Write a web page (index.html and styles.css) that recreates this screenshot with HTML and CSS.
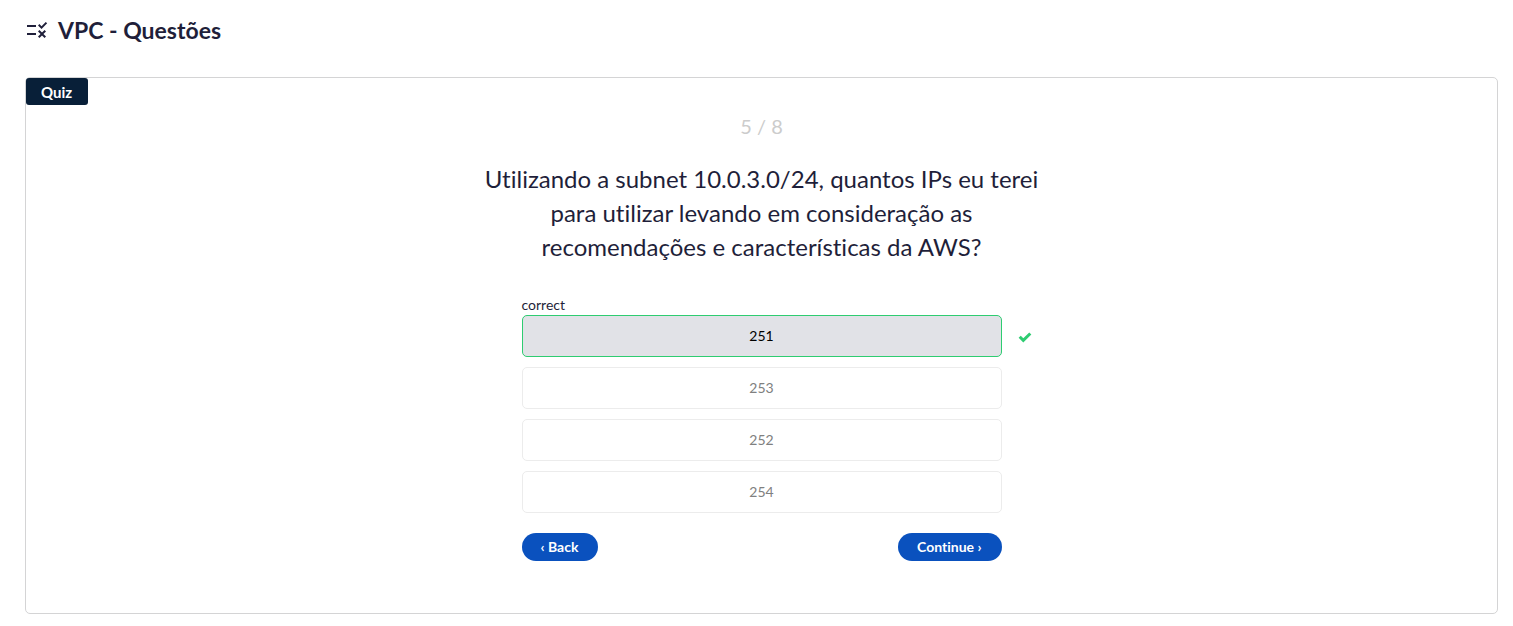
FILE: index.html
```html
<!DOCTYPE html>
<html lang="pt-BR">
<head>
<meta charset="utf-8">
<meta name="viewport" content="width=device-width, initial-scale=1">
<title>VPC - Questões</title>
<link rel="stylesheet" href="styles.css">
</head>
<body>
<main class="page">
  <header class="page-header">
    <svg class="page-icon" viewBox="0 0 24 24" aria-hidden="true"><path d="M16.54 11 13 7.46l1.41-1.41 2.12 2.12 4.24-4.24 1.41 1.41L16.54 11zM11 7H2v2h9V7zm10 6.41L19.59 12 17 14.59 14.41 12 13 13.41 15.59 16 13 18.59 14.41 20 17 17.41 19.59 20 21 18.59 18.41 16 21 13.41zM11 15H2v2h9v-2z"/></svg>
    <h1 class="page-title">VPC - Questões</h1>
  </header>
  <section class="quiz-card">
    <span class="quiz-tag">Quiz</span>
    <div class="quiz-body">
      <p class="quiz-progress">5 / 8</p>
      <h2 class="quiz-question">Utilizando a subnet 10.0.3.0/24, quantos IPs eu terei para utilizar levando em consideração as recomendações e características da AWS?</h2>
      <div class="quiz-answers">
        <span class="answer-label" id="result">correct</span>
        <ul class="answer-list">
          <li class="answer-item">
            <button class="answer answer-correct" type="button" aria-describedby="result">251</button>
            <svg class="answer-check" viewBox="0 0 14 12" aria-hidden="true"><path d="M1.7 4.7 5.3 8.3 12.3 1.5"/></svg>
          </li>
          <li class="answer-item"><button class="answer" type="button">253</button></li>
          <li class="answer-item"><button class="answer" type="button">252</button></li>
          <li class="answer-item"><button class="answer" type="button">254</button></li>
        </ul>
        <nav class="quiz-nav">
          <button class="nav-button" type="button">‹ Back</button>
          <button class="nav-button" type="button">Continue ›</button>
        </nav>
      </div>
    </div>
  </section>
</main>
</body>
</html>
```
FILE: styles.css
```css
* {
  box-sizing: border-box;
}

body {
  margin: 0;
  background: #fff;
  color: #1f1f3a;
  font-family: Lato, "Liberation Sans", sans-serif;
  font-size: 14px;
  font-variant-ligatures: none;
  line-height: 20px;
}

button {
  font: inherit;
  cursor: pointer;
}

.page {
  padding: 12px 15px 12px 25px;
}

.page-header {
  display: flex;
  align-items: center;
  gap: 9px;
  margin-bottom: 29px;
}

.page-icon {
  width: 24px;
  height: 24px;
  fill: currentColor;
}

.page-title {
  margin: 0;
  font-size: 23px;
  font-weight: 700;
  line-height: 36px;
}

.quiz-card {
  display: flex;
  flex-direction: column;
  border: 1px solid #d4d4d5;
  border-radius: 5px;
}

.quiz-tag {
  align-self: flex-start;
  padding: 4px 16px 3px 15px;
  border-radius: 3px;
  background: #081f38;
  color: #fff;
  font-size: 15px;
  font-weight: 700;
}

.quiz-body {
  display: flex;
  flex-direction: column;
  align-items: center;
  padding: 7px 16px 52px;
}

.quiz-progress {
  margin: 0 0 22px;
  color: #ccc;
  font-size: 20px;
  line-height: 28px;
}

.quiz-question {
  max-width: 560px;
  margin: 0 0 31px;
  font-size: 24px;
  font-weight: 400;
  line-height: 34px;
  text-align: center;
}

.quiz-answers {
  width: 100%;
  max-width: 480px;
}

.answer-label {
  display: block;
}

.answer-list {
  display: grid;
  gap: 10px;
  margin: 0 0 20px;
  padding: 0;
  list-style: none;
}

.answer-item {
  position: relative;
}

.answer {
  display: block;
  width: 100%;
  padding: 10px 16px;
  border: 1px solid #ececec;
  border-radius: 5px;
  background: #fff;
  color: #808080;
}

.answer-correct {
  border-color: #2ecc71;
  background: #e1e2e7;
  color: #000;
}

.answer-check {
  position: absolute;
  left: calc(100% + 16px);
  top: 17px;
  width: 14px;
  height: 12px;
  fill: none;
  stroke: #2ecc71;
  stroke-width: 3;
}

.quiz-nav {
  display: flex;
  justify-content: space-between;
}

.nav-button {
  padding: 4px 20px 4px 19px;
  border: 0;
  border-radius: 14px;
  background: #0a51be;
  color: #fff;
  font-weight: 700;
}
```
